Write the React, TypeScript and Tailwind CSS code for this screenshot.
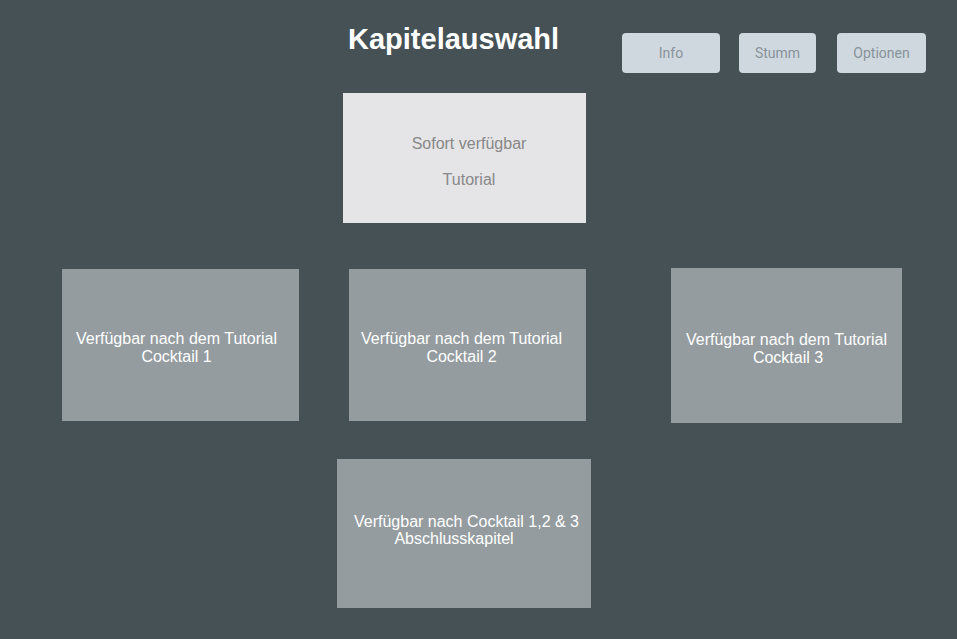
import React from 'react';

const buttons = [
  { label: 'Info', width: 'w-[98px]' },
  { label: 'Stumm', width: 'w-[77px]' },
  { label: 'Optionen', width: 'w-[89px]' },
];

export default function App() {
  return (
    <div className="w-[957px] h-[639px] bg-[#455155] overflow-hidden font-['Liberation_Sans',Arial,sans-serif]">
      {/* header */}
      <div className="flex items-start h-[93px]">
        <h1 className="ml-[348px] mt-[23px] text-[29px] leading-[33px] font-bold text-white">Kapitelauswahl</h1>
        <div className="ml-auto mr-[31px] mt-[33px] flex gap-[19px]">
          {buttons.map((b, i) => (
            <button
              key={b.label}
              className={`${b.width} ${i === 2 ? 'ml-[2px]' : ''} h-[40px] rounded-[4px] bg-[#cfd8de] text-[#88939a] text-[14px] font-['Roboto',sans-serif]`}
            >
              {b.label}
            </button>
          ))}
        </div>
      </div>

      {/* tutorial */}
      <div className="ml-[343px] w-[243px] h-[130px] bg-[#e5e5e7] flex flex-col items-center pl-[9px] pt-[42px] text-[16px] leading-[18px] text-[#888888]">
        <p>Sofort verfügbar</p>
        <p className="mt-[18px]">Tutorial</p>
      </div>

      {/* cocktails */}
      <div className="flex items-start mt-[45px]">
        <div className="ml-[62px] mt-px w-[237px] h-[152px] bg-[#949c9f] flex flex-col justify-center items-center pr-[8px] pt-[5px] text-[16px] leading-[18px] text-white">
          <span>Verfügbar nach dem Tutorial</span>
          <span>Cocktail 1</span>
        </div>
        <div className="ml-[50px] mt-px w-[237px] h-[152px] bg-[#949c9f] flex flex-col justify-center items-center pr-[12px] pt-[5px] text-[16px] leading-[18px] text-white">
          <span>Verfügbar nach dem Tutorial</span>
          <span>Cocktail 2</span>
        </div>
        <div className="ml-[85px] w-[231px] h-[155px] bg-[#949c9f] flex flex-col justify-center items-center pt-[6px] text-[16px] leading-[18px] text-white">
          <span>Verfügbar nach dem Tutorial</span>
          <span className="pl-[3px]">Cocktail 3</span>
        </div>
      </div>

      {/* final */}
      <div className="ml-[337px] mt-[36px] w-[254px] h-[149px] bg-[#949c9f] flex flex-col justify-center text-[16px] leading-[17px] text-white pb-[8px]">
        <span className="text-center pl-[5px]">Verfügbar nach Cocktail 1,2 &amp; 3</span>
        <span className="text-center pr-[20px]">Abschlusskapitel</span>
      </div>
    </div>
  );
}
